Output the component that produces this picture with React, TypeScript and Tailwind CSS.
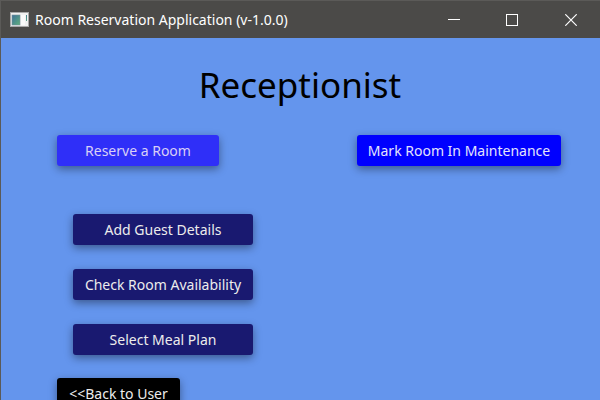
import React from "react";

type Tone = "violet" | "blue" | "navy" | "black";

const tones: Record<Tone, string> = {
  violet: "bg-[#2f2ff8] text-[#d9d0f6]",
  blue: "bg-[#0000ff] text-[#e4e4fc]",
  navy: "bg-[#191970] text-[#ececec]",
  black: "bg-black text-[#ececec]",
};

function ActionButton({ tone, className = "", children }: { tone: Tone; className?: string; children: React.ReactNode }) {
  return (
    <button
      type="button"
      className={`h-[31px] shrink-0 rounded-[3px] text-center text-[14px] leading-[30px] whitespace-nowrap shadow-[0_3px_8px_rgba(0,0,0,0.4)] ${tones[tone]} ${className}`}
    >
      {children}
    </button>
  );
}

function AppIcon() {
  return (
    <svg width="19" height="15" viewBox="0 0 19 15" aria-hidden="true">
      <defs>
        <linearGradient id="pane" x1="0" y1="0" x2="1" y2="1">
          <stop offset="0" stopColor="#3f719a" />
          <stop offset="1" stopColor="#5eb07c" />
        </linearGradient>
      </defs>
      <rect width="19" height="15" fill="#a9a9a9" />
      <rect x="1" y="1" width="17" height="13" fill="#f1f1f1" />
      <rect x="2" y="3" width="8" height="10" fill="url(#pane)" stroke="#78929a" strokeWidth="0.6" />
      <rect x="11" y="3" width="4" height="10" fill="#fafafa" />
      <rect x="16" y="3" width="1" height="6" fill="url(#pane)" />
    </svg>
  );
}

function TitleBar() {
  return (
    <header className="flex h-[38px] shrink-0 items-center border-t border-l border-[#5b5a58] bg-[#4b4a48] pl-[9px] text-white">
      <AppIcon />
      <span className="ml-1.5 flex-1 text-[14px] leading-5 whitespace-nowrap">Room Reservation Application (v-1.0.0)</span>
      <button type="button" aria-label="Minimize" className="flex h-full w-[58px] items-center justify-center">
        <svg width="12" height="12" viewBox="0 0 12 12" stroke="currentColor" shapeRendering="crispEdges">
          <path d="M0 5.5H12" />
        </svg>
      </button>
      <button type="button" aria-label="Maximize" className="flex h-full w-[58px] items-center justify-center">
        <svg width="12" height="12" viewBox="0 0 12 12" fill="none" stroke="currentColor" shapeRendering="crispEdges">
          <rect x="0.5" y="0.5" width="11" height="11" />
        </svg>
      </button>
      <button type="button" aria-label="Close" className="flex h-full w-[59px] items-center justify-center">
        <svg width="12" height="12" viewBox="0 0 12 12" stroke="currentColor" strokeWidth="1.2">
          <path d="M0.3 0.3L11.7 11.7M11.7 0.3L0.3 11.7" />
        </svg>
      </button>
    </header>
  );
}

export default function App() {
  return (
    <div className="flex h-screen flex-col overflow-hidden bg-[#6495ed] font-['Noto_Sans','Open_Sans',sans-serif] shadow-[inset_1px_0_0_#5b5a58]">
      <TitleBar />
      <main className="flex flex-1 flex-col">
        <h1 className="mt-5 text-center text-[35px] leading-[54px] text-black">Receptionist</h1>
        <div className="mt-[23px] grid grid-cols-2">
          <div className="pl-[57px]">
            <ActionButton tone="violet" className="w-[162px]">Reserve a Room</ActionButton>
          </div>
          <div className="pl-[57px]">
            <ActionButton tone="blue" className="w-[204px]">Mark Room In Maintenance</ActionButton>
          </div>
        </div>
        <div className="mt-12 flex w-[253px] flex-col gap-6 pl-[73px]">
          <ActionButton tone="navy">Add Guest Details</ActionButton>
          <ActionButton tone="navy">Check Room Availability</ActionButton>
          <ActionButton tone="navy">Select Meal Plan</ActionButton>
        </div>
        <div className="mt-[23px] pl-[57px]">
          <ActionButton tone="black" className="w-[123px]">&lt;&lt;Back to User</ActionButton>
        </div>
      </main>
    </div>
  );
}
